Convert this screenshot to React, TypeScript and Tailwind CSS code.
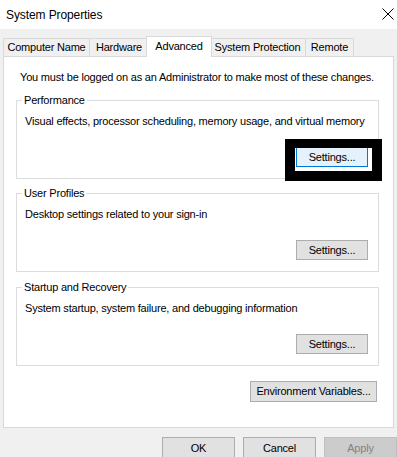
const font = "font-['Liberation_Sans',Arial,sans-serif]";

function Tab({ label, width, selected, ml }: { label: string; width: string; selected?: boolean; ml: string }) {
	if (selected) {
		return (
			<div
				className={`${width} ${ml} relative z-10 -mb-px flex h-[21px] items-center justify-center border border-b-0 border-[#d9d9d9] bg-white pb-[2px]`}
			>
				{label}
			</div>
		);
	}
	return (
		<div className={`${width} ${ml} flex h-[18px] items-center justify-center border border-b-0 border-[#d9d9d9] bg-[#f0f0f0]`}>
			{label}
		</div>
	);
}

function WinButton({ label, focused, disabled, className = "" }: { label: string; focused?: boolean; disabled?: boolean; className?: string }) {
	let tone = "border-[#adadad] bg-[#e1e1e1] text-black";
	if (focused) tone = "border-[#0078d7] bg-[#e5f1fb] text-black";
	if (disabled) tone = "border-[#bfbfbf] bg-[#cccccc] text-[#838383]";
	return (
		<button type="button" className={`flex items-center justify-center border ${tone} ${className}`}>
			{label}
		</button>
	);
}

function GroupBox({
	title,
	text,
	focused,
	className = "",
}: {
	title: string;
	text: string;
	focused?: boolean;
	className?: string;
}) {
	return (
		<div className={`relative ml-[12px] h-[79px] w-[363px] border border-[#dcdcdc] ${className}`}>
			<span className="absolute -top-[8px] left-[5px] bg-white px-[2px] leading-[14px]">{title}</span>
			<div className="pl-[8px] pt-[13px] leading-[14px]">{text}</div>
			<div className="mt-[19px] flex justify-end pr-[10px]">
				<WinButton label="Settings..." focused={focused} className="h-[20px] w-[72px]" />
			</div>
			{/* highlight frame drawn over the focused button */}
			{focused && (
				<div className="pointer-events-none absolute left-[268px] top-[38px] h-[42px] w-[97px] border-[10px] border-t-[9px] border-black" />
			)}
		</div>
	);
}

export default function App() {
	return (
		<div className={`${font} relative h-[457px] w-[397px] overflow-hidden bg-[#f0f0f0] text-[11px] tracking-[-0.2px] text-black`}>
			{/* TITLE BAR */}
			<div className="flex h-[29px] items-center justify-between bg-white pl-[6px] pr-[3px]">
				<span className="text-[12px] tracking-[-0.1px]">System Properties</span>
				<svg width="12" height="12" viewBox="0 0 12 12" className="mb-[1px]">
					<path d="M0.5 0.5 L11.5 11.5 M11.5 0.5 L0.5 11.5" stroke="#000" strokeWidth="1" fill="none" />
				</svg>
			</div>

			{/* TABS */}
			<div className="mt-[7px] flex items-end pl-[3px]">
				<Tab label="Computer Name" width="w-[87px]" ml="ml-0" />
				<Tab label="Hardware" width="w-[60px]" ml="-ml-px" />
				<Tab label="Advanced" width="w-[66px]" ml="-ml-[3px]" selected />
				<Tab label="System Protection" width="w-[97px]" ml="-ml-[3px]" />
				<Tab label="Remote" width="w-[49px]" ml="-ml-px" />
			</div>

			{/* PANEL */}
			<div className="mx-[3px] h-[372px] border border-[#d9d9d9] bg-white">
				<div className="pl-[16px] pt-[13px] leading-[14px]">
					You must be logged on as an Administrator to make most of these changes.
				</div>
				<GroupBox
					className="mt-[16px]"
					title="Performance"
					text="Visual effects, processor scheduling, memory usage, and virtual memory"
					focused
				/>
				<GroupBox className="mt-[14px]" title="User Profiles" text="Desktop settings related to your sign-in" />
				<GroupBox
					className="mt-[15px]"
					title="Startup and Recovery"
					text="System startup, system failure, and debugging information"
				/>
				<div className="mt-[15px] flex justify-end pr-[16px]">
					<WinButton label="Environment Variables..." className="h-[21px] w-[127px]" />
				</div>
			</div>

			{/* DIALOG BUTTONS */}
			<div className="mt-[9px] flex justify-end gap-[8px]">
				<WinButton label="OK" className="h-[23px] w-[73px]" />
				<WinButton label="Cancel" className="h-[23px] w-[73px]" />
				<WinButton label="Apply" disabled className="h-[23px] w-[73px]" />
			</div>
		</div>
	);
}
